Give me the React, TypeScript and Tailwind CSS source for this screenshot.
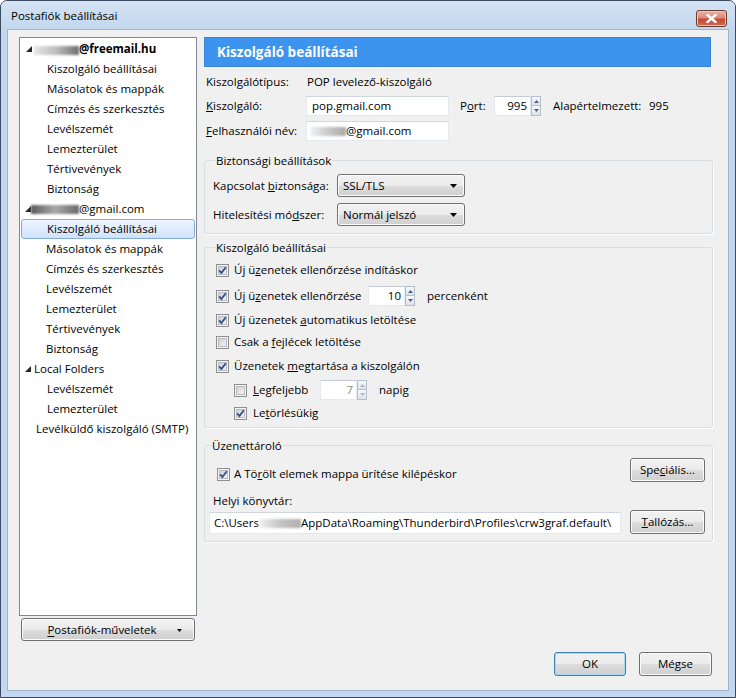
import type { ReactNode } from "react";

const font = { fontFamily: '"Open Sans", "Noto Sans", sans-serif' };

function Check({ checked }: { checked: boolean }) {
	return (
		<svg width="13" height="13" viewBox="0 0 13 13" className="shrink-0">
			<defs>
				<linearGradient id="cbInner" x1="0" y1="0" x2="1" y2="1">
					<stop offset="0" stopColor="#cbcfd5" />
					<stop offset="1" stopColor="#f6f6f6" />
				</linearGradient>
			</defs>
			<rect x="0.5" y="0.5" width="12" height="12" fill="#f4f4f4" stroke="#8e8f8f" />
			<rect x="2.5" y="2.5" width="8" height="8" fill="url(#cbInner)" stroke="#b8bcc2" />
			{checked && (
				<path d="M3.2 6.4 L5.4 9 L9.8 3.2" fill="none" stroke="#3d4f86" strokeWidth="1.9" />
			)}
		</svg>
	);
}

function Spin({ value, disabled }: { value: string; disabled?: boolean }) {
	return (
		<div className="flex h-[20px]">
			<div
				className={`w-[37px] h-[20px] bg-white border border-[#e3e9ef] border-t-[#c5cbd3] text-right pr-[3px] leading-[18px] ${disabled ? "text-[#8a8a8a]" : "text-black"}`}
			>
				{value}
			</div>
			<div className="w-[10px] flex flex-col">
				<div className="h-[10px] border border-[#b5bfcc] bg-gradient-to-b from-[#f6f8fb] to-[#dde3ea] flex items-center justify-center">
					<svg width="5" height="3" viewBox="0 0 5 3">
						<path d="M0 3 L2.5 0 L5 3 Z" fill={disabled ? "#b0b8c4" : "#4d6185"} />
					</svg>
				</div>
				<div className="h-[10px] border border-t-0 border-[#b5bfcc] bg-gradient-to-b from-[#f6f8fb] to-[#dde3ea] flex items-center justify-center">
					<svg width="5" height="3" viewBox="0 0 5 3">
						<path d="M0 0 L2.5 3 L5 0 Z" fill={disabled ? "#b0b8c4" : "#4d6185"} />
					</svg>
				</div>
			</div>
		</div>
	);
}

function Btn({ children, className = "", isDefault }: { children: ReactNode; className?: string; isDefault?: boolean }) {
	return (
		<div
			className={`flex items-center justify-center rounded-[3px] border ${isDefault ? "border-[#3c7fb1] shadow-[inset_0_0_0_1px_#a6d9f4]" : "border-[#707070] shadow-[inset_0_0_0_1px_#fcfcfc]"} bg-[linear-gradient(to_bottom,#f2f2f2_0%,#ebebeb_50%,#dddddd_51%,#cfcfcf_100%)] ${className}`}
		>
			{children}
		</div>
	);
}

function Select({ text }: { text: string }) {
	return (
		<div className="w-[128px] h-[23px] rounded-[3px] border border-[#707070] shadow-[inset_0_0_0_1px_#fcfcfc] bg-[linear-gradient(to_bottom,#f2f2f2_0%,#ebebeb_50%,#dddddd_51%,#cfcfcf_100%)] flex items-center pl-[5px] pr-[7px]">
			<span className="flex-1">{text}</span>
			<svg width="7" height="4" viewBox="0 0 7 4">
				<path d="M0 0 L7 0 L3.5 4 Z" fill="#000" />
			</svg>
		</div>
	);
}

function Group({ title, children, className = "" }: { title: string; children: ReactNode; className?: string }) {
	return (
		<fieldset className={`border border-[#d5dfe5] rounded-[3px] shadow-[1px_1px_0_#ffffff] px-[8px] ${className}`}>
			<legend className="ml-[2px] px-[1px] leading-[17px]">{title}</legend>
			{children}
		</fieldset>
	);
}

function CheckRow({ checked, children, className = "" }: { checked: boolean; children: ReactNode; className?: string }) {
	return (
		<div className={`flex items-center gap-[5px] ${className}`}>
			<Check checked={checked} />
			<span>{children}</span>
		</div>
	);
}

function Blur({ w, from, to, via }: { w: number; from: string; to: string; via?: string }) {
	return (
		<span
			className="inline-block h-[9px] align-middle blur-[1.2px]"
			style={{
				width: w,
				background: via ? `linear-gradient(to right, ${from}, ${via}, ${to})` : `linear-gradient(to right, ${from}, ${to})`,
			}}
		/>
	);
}

function Tri() {
	return (
		<svg width="6" height="6" viewBox="0 0 6 6" className="shrink-0">
			<path d="M6 0 L6 6 L0 6 Z" fill="#262626" />
		</svg>
	);
}

const child = [
	"Kiszolgáló beállításai",
	"Másolatok és mappák",
	"Címzés és szerkesztés",
	"Levélszemét",
	"Lemezterület",
	"Tértivevények",
	"Biztonság",
];

export default function App() {
	return (
		<div
			className="w-[736px] h-[698px] bg-[#c3d7ee] border border-[#3c4b5f] rounded-t-[7px] flex flex-col text-[11.5px] text-black overflow-hidden"
			style={font}
		>
			{/* címsor */}
			<div className="h-[28px] flex items-start pl-[10px] pr-[8px] bg-gradient-to-b from-[#d4e3f4] to-[#c3d7ee]">
				<span className="mt-[6px] text-[11.5px]">Postafiók beállításai</span>
				<div className="ml-auto mt-[9px] w-[31px] h-[17px] rounded-[3px] border border-[#6a3a33] bg-[linear-gradient(to_bottom,#eab3a5_0%,#d98a78_45%,#c44a33_55%,#d06a4e_100%)] flex items-center justify-center shadow-[inset_0_0_0_1px_#f0c4b8]">
					<svg width="11" height="9" viewBox="0 0 11 9">
						<path d="M1.5 1 L9.5 8 M9.5 1 L1.5 8" stroke="#ffffff" strokeWidth="2.4" strokeLinecap="square" />
					</svg>
				</div>
			</div>

			<div className="flex-1 mx-[6px] mb-[6px] border border-[#9fb4cd] bg-[#f0f0f0] flex flex-col pt-[7px] pl-[11px] pr-[12px] pb-[12px]">
				<div className="flex gap-[7px] h-[604px]">
					{/* fa */}
					<div className="w-[178px] flex flex-col">
						<div className="h-[579px] bg-white border border-[#828790] pt-[1px] px-[1px]">
							<div className="h-[20px] flex items-center pl-[5px]">
								<Tri />
								<span className="ml-[2px]"><Blur w={45} from="#e6e6e6" via="#bdbdbd" to="#6e6e6e" /></span>
								<span className="font-bold">@freemail.hu</span>
							</div>
							{child.map((c) => (
								<div key={"a" + c} className="h-[20px] flex items-center pl-[26px]">{c}</div>
							))}
							<div className="h-[20px] flex items-center pl-[4px]">
								<Tri />
								<Blur w={48} from="#5a5a5a" via="#a8a8a8" to="#6a6a6a" />
								<span>@gmail.com</span>
							</div>
							{child.map((c, i) => (
								<div
									key={"b" + c}
									className={`h-[20px] flex items-center pl-[25px] ${i === 0 ? "border border-[#84acdd] rounded-[3px] bg-gradient-to-b from-[#eef5fd] to-[#cfe3fc]" : ""}`}
								>
									{c}
								</div>
							))}
							<div className="h-[20px] flex items-center pl-[4px] gap-[3px]">
								<Tri />
								<span>Local Folders</span>
							</div>
							<div className="h-[20px] flex items-center pl-[26px]">Levélszemét</div>
							<div className="h-[20px] flex items-center pl-[26px]">Lemezterület</div>
							<div className="h-[20px] flex items-center pl-[15px]">Levélküldő kiszolgáló (SMTP)</div>
						</div>
						<Btn className="mt-[2px] mx-[2px] h-[23px] relative">
							<span className="mr-[12px]">
								<u className="underline-offset-2">P</u>ostafiók-műveletek
							</span>
							<svg width="5" height="3" viewBox="0 0 5 3" className="absolute right-[12px] top-[10px]">
								<path d="M0 0 L5 0 L2.5 3 Z" fill="#000" />
							</svg>
						</Btn>
					</div>

					{/* jobb oldal */}
					<div className="w-[509px] flex flex-col">
						<div className="h-[30px] w-[507px] bg-[#3d94ee] border border-[#3a86d6] flex items-center pl-[12px]">
							<span className="text-white font-bold text-[13.5px]">Kiszolgáló beállításai</span>
						</div>

						<div className="mt-[5px] h-[20px] flex items-center pl-[2px]">
							<span className="w-[101px]">Kiszolgálótípus:</span>
							<span>POP levelező-kiszolgáló</span>
						</div>
						<div className="mt-[4px] h-[20px] flex items-center pl-[2px]">
							<span className="w-[100px]"><u>K</u>iszolgáló:</span>
							<div className="w-[143px] h-[20px] bg-white border border-[#e3e9ef] border-t-[#d0d6de] pl-[5px] leading-[18px]">pop.gmail.com</div>
							<span className="ml-[11px] w-[34px]">P<u>o</u>rt:</span>
							<Spin value="995" />
							<span className="ml-[12px] w-[96px]">Alapértelmezett:</span>
							<span>995</span>
						</div>
						<div className="mt-[5px] h-[20px] flex items-center pl-[2px]">
							<span className="w-[100px]"><u>F</u>elhasználói név:</span>
							<div className="w-[143px] h-[20px] bg-white border border-[#e3e9ef] border-t-[#d0d6de] pl-[3px] leading-[18px] flex items-center">
								<Blur w={36} from="#f4f4f4" via="#c9c9c9" to="#a9a9a9" />
								<span>@gmail.com</span>
							</div>
						</div>

						<Group title="Biztonsági beállítások" className="mt-[11px] h-[82px]">
							<div className="mt-[5px] h-[23px] flex items-center">
								<span className="w-[124px]">Kapcsolat <u>b</u>iztonsága:</span>
								<Select text="SSL/TLS" />
							</div>
							<div className="mt-[6px] h-[23px] flex items-center">
								<span className="w-[124px]">Hitelesítési mó<u>d</u>szer:</span>
								<Select text="Normál jelszó" />
							</div>
						</Group>

						<Group title="Kiszolgáló beállításai" className="mt-[5px] h-[189px]">
							<CheckRow checked className="mt-[5px] h-[18px] pl-[3px]">
								Új ü<u>z</u>enetek ellenőrzése indításkor
							</CheckRow>
							<div className="mt-[6px] h-[22px] flex items-center pl-[3px]">
								<Check checked />
								<span className="ml-[5px] w-[134px]">Új ü<u>z</u>enetek ellenőrzése</span>
								<Spin value="10" />
								<span className="ml-[12px]">percenként</span>
							</div>
							<CheckRow checked className="mt-[4px] h-[18px] pl-[3px]">
								Új üzenetek <u>a</u>utomatikus letöltése
							</CheckRow>
							<CheckRow checked={false} className="mt-[4px] h-[18px] pl-[3px]">
								Csak a <u>f</u>ejlécek letöltése
							</CheckRow>
							<CheckRow checked className="mt-[6px] h-[18px] pl-[3px]">
								Üzenetek <u>m</u>egtartása a kiszolgálón
							</CheckRow>
							<div className="mt-[4px] h-[22px] flex items-center pl-[21px]">
								<Check checked={false} />
								<span className="ml-[6px] w-[67px]"><u>L</u>egfeljebb</span>
								<Spin value="7" disabled />
								<span className="ml-[12px]">napig</span>
							</div>
							<CheckRow checked className="mt-[3px] h-[18px] pl-[21px] gap-[6px]">
								Le<u>t</u>örlésükig
							</CheckRow>
						</Group>

						<Group title="Üzenettároló" className="mt-[9px] h-[105px] pl-[4px] pr-[7px]">
							<div className="mt-[4px] flex items-center h-[24px]">
								<div className="flex items-center gap-[4px] pl-[8px] mt-[8px]">
									<Check checked />
									<span>A Tö<u>r</u>ölt elemek mappa ürítése kilépéskor</span>
								</div>
								<Btn className="ml-auto w-[75px] h-[24px]">
									Spe<u>c</u>iális...
								</Btn>
							</div>
							<div className="mt-[10px] pl-[4px] h-[17px] leading-[17px]">Helyi könyvtár:</div>
							<div className="mt-[1px] flex items-end h-[24px]">
								<div className="w-[412px] h-[22px] bg-white border border-[#e3e9ef] border-t-[#d0d6de] pl-[4px] flex items-center overflow-hidden whitespace-nowrap">
									<span>C:\Users</span>
									<Blur w={42} from="#f2f2f2" via="#c4c4c4" to="#b0b0b0" />
									<span>AppData\Roaming\Thunderbird\Profiles\crw3graf.default\</span>
								</div>
								<Btn className="ml-auto w-[75px] h-[24px]">
									<u>T</u>allózás...
								</Btn>
							</div>
						</Group>
					</div>
				</div>

				<div className="mt-[11px] flex justify-end gap-[13px] mr-[4px]">
					<Btn isDefault className="w-[72px] h-[24px]">OK</Btn>
					<Btn className="w-[73px] h-[24px]">Mégse</Btn>
				</div>
			</div>
		</div>
	);
}
